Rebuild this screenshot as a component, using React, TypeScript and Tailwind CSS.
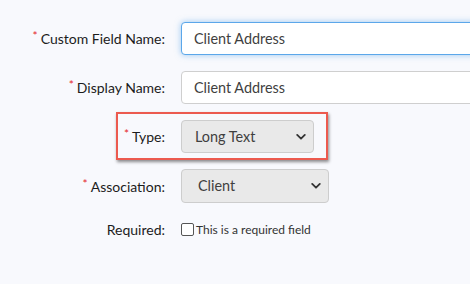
import React from "react";

function Chevron() {
  return (
    <svg width="10" height="7" viewBox="0 0 10 7" className="pointer-events-none absolute right-[7px] top-1/2 -translate-y-1/2">
      <path d="M1.2 1.4 L5 5.2 L8.8 1.4" fill="none" stroke="#333" strokeWidth="1.8" strokeLinecap="round" strokeLinejoin="round" />
    </svg>
  );
}

function Label({ text, required }: { text: string; required?: boolean }) {
  return (
    <div className="flex items-center justify-end text-[14px] text-[#1c1c1c]">
      {required && <span className="mr-[3px] -mt-[5px] text-[12px] text-[#e5282a]">*</span>}
      <span>{text}</span>
    </div>
  );
}

export default function App() {
  return (
    <div className="h-[284px] w-[470px] overflow-hidden bg-[#f8f9fd] pt-[22px]" style={{ fontFamily: "Lato, 'Open Sans', sans-serif" }}>
      <div className="grid grid-cols-[165px_1fr] items-center gap-x-[16px] gap-y-[16px]">
        <Label text="Custom Field Name:" required />
        <div className="flex h-[33px] w-[320px] items-center rounded-[4px] border border-[#5ba7ea] bg-white pl-[12px] text-[14.4px] text-[#3f3f3f] shadow-[0_0_6px_rgba(80,160,230,0.55)]">
          Client Address
        </div>

        <Label text="Display Name:" required />
        <div className="flex h-[33px] w-[320px] items-center rounded-[4px] border border-[#cfcfcf] bg-white pl-[12px] text-[14.4px] text-[#3f3f3f]">
          Client Address
        </div>

        <div className="relative col-span-2 grid grid-cols-[165px_1fr] items-center gap-x-[16px]">
          <Label text="Type:" required />
          <div className="relative flex h-[33px] w-[133px] items-center rounded-[4px] border border-[#cdcdcd] bg-[#e9e9e9] pl-[13px] text-[14.4px] text-[#3f3f3f]">
            Long Text
            <Chevron />
          </div>
          <div className="pointer-events-none absolute left-[116px] top-[-8px] h-[48px] w-[212px] border-2 border-[#ec5a4f] shadow-[1px_2px_3px_rgba(0,0,0,0.45)]" />
        </div>

        <Label text="Association:" required />
        <div className="relative flex h-[34px] w-[148px] items-center rounded-[4px] border border-[#cdcdcd] bg-[#e9e9e9] pl-[16px] text-[14.4px] text-[#3f3f3f]">
          Client
          <Chevron />
        </div>

        <div className="flex items-center justify-end text-[14px] text-[#1c1c1c]">Required:</div>
        <div className="flex items-center gap-[2px] text-[12px] text-[#333]">
          <span className="inline-block h-[13px] w-[13px] rounded-[2px] border border-[#555] bg-white" />
          <span>This is a required field</span>
        </div>
      </div>
    </div>
  );
}
